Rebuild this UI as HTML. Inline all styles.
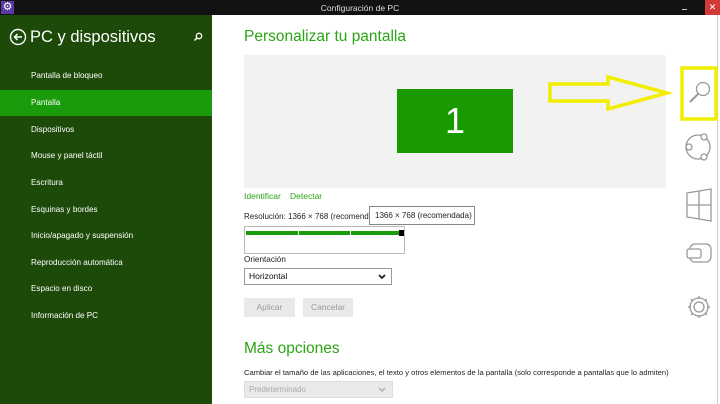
<!DOCTYPE html>
<html><head><meta charset="utf-8"><style>
*{margin:0;padding:0;box-sizing:border-box}
body{width:720px;height:404px;overflow:hidden;background:#fff;font-family:"Liberation Sans",sans-serif;position:relative}
.a{position:absolute;white-space:nowrap}
#tb{left:0;top:0;width:720px;height:15px;background:#121212}
#side{left:0;top:15px;width:212px;height:389px;background:#1d4a09}
.it{position:absolute;left:31px;color:#fff;font-size:8.1px}
.g{color:#2aa514}
</style></head><body>
<div class="a" id="tb"></div>
<div class="a" style="left:1px;top:1px;width:13px;height:13px;background:#5a3aa0;color:#fff;font-size:11px;line-height:13px;text-align:center">⚙</div>
<div class="a" style="left:0;top:3px;width:720px;text-align:center;color:#ddd;font-size:8.5px">Configuración de PC</div>
<div class="a" style="left:682px;top:9px;width:5px;height:1px;background:#ccc"></div>
<div class="a" style="left:705px;top:0;width:15px;height:15px;background:#d23a3a;color:#fff;font-size:9px;line-height:15px;text-align:center">✕</div>
<div class="a" id="side"></div>
<svg class="a" style="left:9px;top:28px" width="18" height="18" viewBox="0 0 18 18"><circle cx="9" cy="9" r="7.5" fill="none" stroke="#fff" stroke-width="1.4"/><path d="M13 9H5.5M8.5 6 5.5 9l3 3" fill="none" stroke="#fff" stroke-width="1.5"/></svg>
<div class="a" style="left:30px;top:28px;color:#fff;font-size:16.5px">PC y dispositivos</div>
<svg class="a" style="left:193px;top:32px" width="10" height="10" viewBox="0 0 10 10"><circle cx="6" cy="4" r="2.7" fill="none" stroke="#fff" stroke-width="1.3"/><path d="M4 6 1.5 8.5" stroke="#fff" stroke-width="1.5"/></svg>
<div class="a" style="left:0;top:90px;width:212px;height:26px;background:#1a9b0c"></div>
<div class="it" style="top:71px">Pantalla de bloqueo</div>
<div class="it" style="top:98px">Pantalla</div>
<div class="it" style="top:125px">Dispositivos</div>
<div class="it" style="top:151px">Mouse y panel táctil</div>
<div class="it" style="top:178px">Escritura</div>
<div class="it" style="top:205px">Esquinas y bordes</div>
<div class="it" style="top:231px">Inicio/apagado y suspensión</div>
<div class="it" style="top:258px">Reproducción automática</div>
<div class="it" style="top:284px">Espacio en disco</div>
<div class="it" style="top:311px">Información de PC</div>

<div class="a g" style="left:244px;top:28px;font-size:15.5px">Personalizar tu pantalla</div>
<div class="a" style="left:244px;top:55px;width:422px;height:133px;background:#f2f2f2"></div>
<div class="a" style="left:397px;top:89px;width:116px;height:64px;background:#189a00;color:#fff;font-size:36px;line-height:64px;text-align:center">1</div>
<div class="a g" style="left:244px;top:191px;font-size:8.5px">Identificar</div>
<div class="a g" style="left:290px;top:191px;font-size:8.5px">Detectar</div>
<div class="a" style="left:244px;top:212px;font-size:8px;color:#222">Resolución: 1366 × 768 (recomendada)</div>
<div class="a" style="left:244px;top:226px;width:161px;height:28px;border:1px solid #bbb;background:#fff"></div>
<div class="a" style="left:246px;top:231px;width:154px;height:4px;background:#1a9b0c"></div>
<div class="a" style="left:298px;top:231px;width:1px;height:4px;background:#fff"></div>
<div class="a" style="left:350px;top:231px;width:1px;height:4px;background:#fff"></div>
<div class="a" style="left:399px;top:230px;width:5px;height:6px;background:#000"></div>
<div class="a" style="left:369px;top:206px;width:106px;height:19px;border:1px solid #888;background:#fff;font-size:8px;color:#222;line-height:17px;padding-left:5px">1366 × 768 (recomendada)</div>
<div class="a" style="left:244px;top:255px;font-size:8.2px;color:#222">Orientación</div>
<div class="a" style="left:244px;top:268px;width:148px;height:17px;border:1px solid #999;font-size:8.5px;color:#111;line-height:15px;padding-left:4px">Horizontal<svg style="position:absolute;right:5px;top:5px" width="8" height="6" viewBox="0 0 8 6"><path d="M1 1 4 4 7 1" fill="none" stroke="#111" stroke-width="1.6"/></svg></div>
<div class="a" style="left:244px;top:298px;width:51px;height:19px;background:#e9e9e9;color:#999;font-size:8.5px;line-height:19px;text-align:center">Aplicar</div>
<div class="a" style="left:303px;top:298px;width:50px;height:19px;background:#e9e9e9;color:#999;font-size:8.5px;line-height:19px;text-align:center">Cancelar</div>
<div class="a g" style="left:244px;top:340px;font-size:15.5px">Más opciones</div>
<div class="a" style="left:244px;top:368px;font-size:7.6px;color:#222">Cambiar el tamaño de las aplicaciones, el texto y otros elementos de la pantalla (solo corresponde a pantallas que lo admiten)</div>
<div class="a" style="left:244px;top:381px;width:149px;height:17px;background:#e9e9e9;border:1px solid #ddd;font-size:8px;color:#aaa;line-height:15px;padding-left:4px">Predeterminado<svg style="position:absolute;right:6px;top:5px" width="8" height="6" viewBox="0 0 8 6"><path d="M1 1 4 4 7 1" fill="none" stroke="#aaa" stroke-width="1.4"/></svg></div>

<div class="a" style="left:717px;top:15px;width:1px;height:389px;background:#ccc"></div>
<svg class="a" style="left:540px;top:60px" width="180" height="344" viewBox="540 60 180 344">
<path d="M550 84H608V77L667 93L608 109V101H550Z" fill="none" stroke="#f2ee00" stroke-width="3.5" stroke-linejoin="miter"/>
<rect x="682" y="68" width="34" height="51" fill="none" stroke="#f2ee00" stroke-width="3.5"/>
<g fill="none" stroke="#999" stroke-width="1.3">
<circle cx="703" cy="89" r="6.5"/><path d="M698.5 93.5 690 102" stroke-width="2"/>
<circle cx="698" cy="147" r="12"/><circle cx="704" cy="137" r="3" fill="#fff"/><circle cx="689" cy="147" r="3" fill="#fff"/><circle cx="704" cy="157" r="3" fill="#fff"/>
<path d="M687 193 711 189V221L687 217Z M687 205H711 M699 191V219"/>
<rect x="690" y="244" width="21" height="18" rx="5"/><rect x="687" y="249" width="14" height="9" rx="2" fill="#fff"/>
<circle cx="699" cy="307" r="5"/><path d="M699 296V299M699 315V318M688 307H691M707 307H710M691 299 693 301M705 313 707 315M707 299 705 301M693 313 691 315"/><circle cx="699" cy="307" r="9"/>
</g></svg>
</body></html>
